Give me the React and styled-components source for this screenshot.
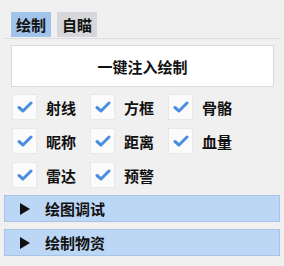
import React from 'react';
import styled, { createGlobalStyle } from 'styled-components';

const Global = createGlobalStyle`
    body {
        margin: 0;
        background: #f0f0f0;
        font-family: "Noto Sans CJK SC", "Liberation Sans", sans-serif;
    }
`;

const Panel = styled.div`
    width: 284px;
    height: 266px;
    padding: 12px 4px 0 4px;
    box-sizing: border-box;
    background: #f0f0f0;
`;

const TabBar = styled.div`
    display: flex;
    gap: 6px;
    padding-left: 7px;
    border-bottom: 1px solid #dcdcdc;
    padding-bottom: 1px;
`;

const Tab = styled.div`
    width: 40px;
    height: 25px;
    display: flex;
    align-items: center;
    justify-content: center;
    font-size: 15px;
    font-weight: 700;
    color: #111;
    background: ${p => (p.active ? '#a3c4ea' : '#d6d7da')};
`;

const Body = styled.div`
    padding: 6px 6px 0 7px;
`;

const Button = styled.div`
    height: 40px;
    background: #ffffff;
    border: 1px solid #dadada;
    display: flex;
    align-items: center;
    justify-content: center;
    font-size: 15px;
    font-weight: 700;
    color: #111;
`;

const Grid = styled.div`
    display: grid;
    grid-template-columns: repeat(3, 78px);
    row-gap: 8px;
    margin-top: 7px;
    padding-left: 1px;
`;

const Item = styled.div`
    display: flex;
    align-items: center;
    gap: 9px;
    height: 26px;
    font-size: 15px;
    font-weight: 700;
    color: #111;
`;

const Box = styled.div`
    width: 25px;
    height: 26px;
    box-sizing: border-box;
    background: #fbfbfb;
    border: 1px solid #e8e8e8;
    display: flex;
    align-items: center;
    justify-content: center;
`;

const Headers = styled.div`
    display: flex;
    flex-direction: column;
    gap: 7px;
    margin-top: 7px;
`;

const Header = styled.div`
    height: 27px;
    box-sizing: border-box;
    background: #bcd6f5;
    border: 1px solid #a9c3e6;
    display: flex;
    align-items: center;
    padding-left: 15px;
    gap: 15px;
    font-size: 15px;
    font-weight: 700;
    color: #111;
`;

const Check = () => (
    <svg width="16" height="12" viewBox="0 0 16 12">
        <path d="M2 6.5 L6 10 L14 2" fill="none" stroke="#4a8fdf" strokeWidth="3" strokeLinecap="round" strokeLinejoin="round" />
    </svg>
);

const Arrow = () => (
    <svg width="10" height="12" viewBox="0 0 10 12">
        <path d="M0 0 L10 6 L0 12 Z" fill="#111" />
    </svg>
);

const items = ['射线', '方框', '骨骼', '昵称', '距离', '血量', '雷达', '预警'];

export default function App() {
    return (
        <Panel>
            <Global />
            <TabBar>
                <Tab active>绘制</Tab>
                <Tab>自瞄</Tab>
            </TabBar>
            <Body>
                <Button>一键注入绘制</Button>
                <Grid>
                    {items.map(label => (
                        <Item key={label}>
                            <Box><Check /></Box>
                            {label}
                        </Item>
                    ))}
                </Grid>
            </Body>
            <Headers>
                <Header><Arrow />绘图调试</Header>
                <Header><Arrow />绘制物资</Header>
            </Headers>
        </Panel>
    );
}
